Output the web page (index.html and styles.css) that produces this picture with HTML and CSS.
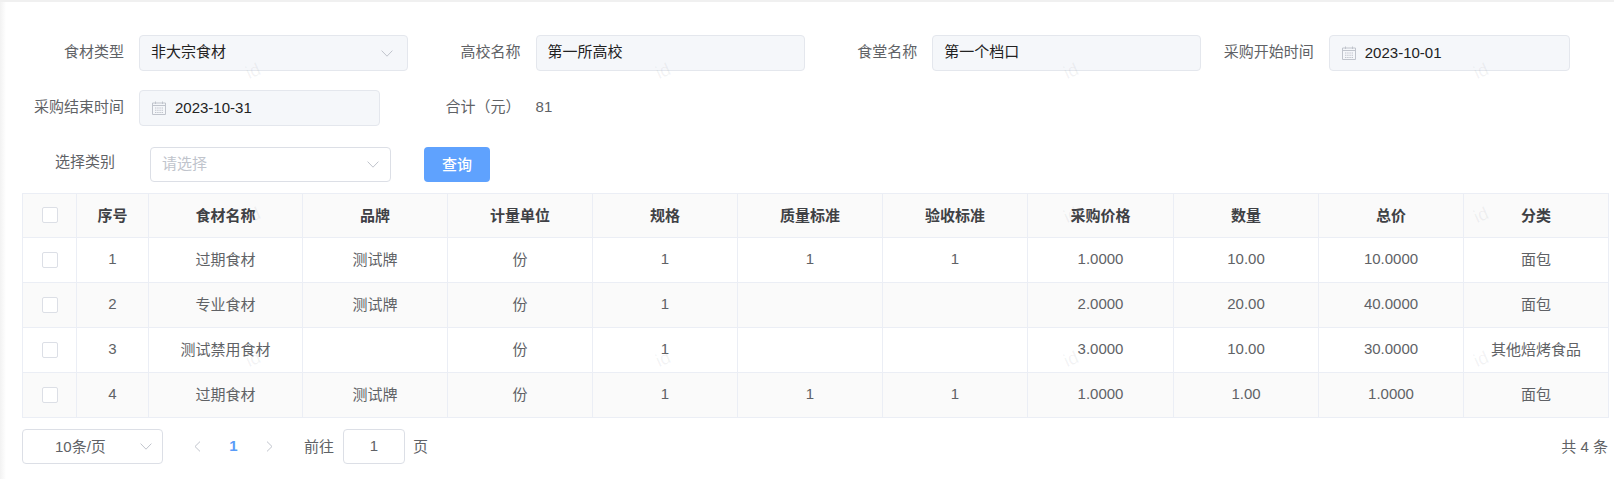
FILE: index.html
```html
<!DOCTYPE html>
<html lang="zh-CN">
<head>
<meta charset="utf-8">
<title>食材采购</title>
<link rel="stylesheet" href="styles.css">
</head>
<body>
<svg class="sprite" width="0" height="0" aria-hidden="true">
  <symbol id="chev" viewBox="0 0 12 7"><path d="M0.6 0.6 L6 6.2 L11.4 0.6" fill="none" stroke="currentColor" stroke-width="1"/></symbol>
  <symbol id="cal" viewBox="0 0 14 14">
    <path d="M0.5 2h13v11.5h-13z M0.5 4.5h13 M3.5 0.5v2.5 M10.5 0.5v2.5" fill="none" stroke="currentColor" stroke-width="1"/>
    <path d="M3 6.5h1.4v1H3z M5.2 6.5h1.4v1H5.2z M7.4 6.5h1.4v1H7.4z M9.6 6.5h1.4v1H9.6z M3 8.7h1.4v1H3z M5.2 8.7h1.4v1H5.2z M7.4 8.7h1.4v1H7.4z M9.6 8.7h1.4v1H9.6z M3 10.9h1.4v1H3z M5.2 10.9h1.4v1H5.2z M7.4 10.9h1.4v1H7.4z M9.6 10.9h1.4v1H9.6z" fill="currentColor"/>
  </symbol>
</svg>
<main class="page">
  <section class="form">
    <div class="form-row row-one">
      <div class="item"><span class="label">食材类型</span><div class="control filled select"><span>非大宗食材</span><svg class="chev"><use href="#chev"/></svg></div></div>
      <div class="item"><span class="label">高校名称</span><div class="control filled"><span>第一所高校</span></div></div>
      <div class="item"><span class="label">食堂名称</span><div class="control filled"><span>第一个档口</span></div></div>
      <div class="item"><span class="label">采购开始时间</span><div class="control filled date"><svg class="cal"><use href="#cal"/></svg><span>2023-10-01</span></div></div>
    </div>
    <div class="form-row row-two">
      <div class="item"><span class="label">采购结束时间</span><div class="control filled date"><svg class="cal"><use href="#cal"/></svg><span>2023-10-31</span></div></div>
      <div class="item"><span class="label">合计（元）</span><span class="value">81</span></div>
    </div>
    <div class="form-row row-three">
      <span class="label label-short">选择类别</span>
      <div class="control select pick"><span class="placeholder">请选择</span><svg class="chev"><use href="#chev"/></svg></div>
      <button class="btn" type="button">查询</button>
    </div>
  </section>

  <table class="grid">
    <colgroup>
      <col class="c-check"><col class="c-no"><col class="c-name">
      <col class="c-std"><col class="c-std"><col class="c-std"><col class="c-std"><col class="c-std"><col class="c-wide"><col class="c-std"><col class="c-std"><col class="c-std">
    </colgroup>
    <thead>
      <tr><th><span class="box"></span></th><th>序号</th><th>食材名称</th><th>品牌</th><th>计量单位</th><th>规格</th><th>质量标准</th><th>验收标准</th><th>采购价格</th><th>数量</th><th>总价</th><th>分类</th></tr>
    </thead>
    <tbody>
      <tr><td><span class="box"></span></td><td>1</td><td>过期食材</td><td>测试牌</td><td>份</td><td>1</td><td>1</td><td>1</td><td>1.0000</td><td>10.00</td><td>10.0000</td><td>面包</td></tr>
      <tr><td><span class="box"></span></td><td>2</td><td>专业食材</td><td>测试牌</td><td>份</td><td>1</td><td></td><td></td><td>2.0000</td><td>20.00</td><td>40.0000</td><td>面包</td></tr>
      <tr><td><span class="box"></span></td><td>3</td><td>测试禁用食材</td><td></td><td>份</td><td>1</td><td></td><td></td><td>3.0000</td><td>10.00</td><td>30.0000</td><td>其他焙烤食品</td></tr>
      <tr><td><span class="box"></span></td><td>4</td><td>过期食材</td><td>测试牌</td><td>份</td><td>1</td><td>1</td><td>1</td><td>1.0000</td><td>1.00</td><td>1.0000</td><td>面包</td></tr>
    </tbody>
  </table>

  <nav class="pager">
    <div class="control select sizes"><span>10条/页</span><svg class="chev"><use href="#chev"/></svg></div>
    <div class="pages">
      <svg class="arrow" viewBox="0 0 7 11"><path d="M6 0.6 L1 5.5 L6 10.4" fill="none" stroke="currentColor"/></svg>
      <span class="current">1</span>
      <svg class="arrow" viewBox="0 0 7 11"><path d="M1 0.6 L6 5.5 L1 10.4" fill="none" stroke="currentColor"/></svg>
    </div>
    <span class="goto">前往</span>
    <div class="control jump">1</div>
    <span class="goto-end">页</span>
    <span class="total">共 4 条</span>
  </nav>

  <div class="marks" aria-hidden="true">
    <span class="mark m1">id</span><span class="mark m2">id</span><span class="mark m3">id</span><span class="mark m4">id</span>
    <span class="mark m5">id</span><span class="mark m6">id</span><span class="mark m7">id</span><span class="mark m8">id</span>
    <span class="mark m9">id</span><span class="mark m10">id</span><span class="mark m11">id</span><span class="mark m12">id</span>
  </div>
</main>
</body>
</html>
```

FILE: styles.css
```css
* { box-sizing: border-box; }

html, body {
  margin: 0;
  height: 100%;
  background: #fff;
  overflow: hidden;
}

body {
  font-family: "Liberation Sans", "Noto Sans CJK SC", sans-serif;
  font-size: 15px;
  color: #606266;
}

.sprite { position: absolute; }

.page {
  position: relative;
  height: 479px;
  padding: 33px 6px 0 22px;
  border-top: 2px solid #f0f0f0;
  background: linear-gradient(to right, #f2f2f2 0, #fff 6px);
}

.form { margin-left: 12px; }

.form-row { display: flex; align-items: center; }
.row-one { height: 36px; }
.row-two { height: 36px; margin-top: 19px; }
.row-three { height: 35px; margin-top: 21px; }

.item {
  display: flex;
  align-items: center;
  width: 396.6px;
  flex: none;
}

.label {
  width: 90px;
  margin-right: 15px;
  padding-bottom: 5px;
  text-align: right;
  flex: none;
  color: #606266;
  white-space: nowrap;
}

.label-short { width: 81px; margin-right: 35px; padding-bottom: 8px; }

.control {
  height: 100%;
  display: flex;
  align-items: center;
  border: 1px solid #dcdfe6;
  border-radius: 4px;
  background: #fff;
}

.control > span { padding-bottom: 5px; }

.item .control { height: 36px; width: 269px; padding: 0 11px; }
.filled { background: #f5f7fa; border-color: #e4e7ed; color: #222; }
.item .date { width: 241px; padding-left: 12px; }
.date > span { padding-bottom: 2px; }

.select { justify-content: space-between; }
.item .select { padding-right: 14px; }

.chev { width: 12px; height: 7px; color: #c0c4cc; flex: none; }
.cal { width: 14px; height: 14px; color: #c0c4cc; margin-right: 9px; flex: none; }

.value { padding-bottom: 3px; }

.pick { width: 241px; padding: 0 11px 0 11px; }
.placeholder { color: #c0c4cc; }

.btn {
  width: 66px;
  height: 35px;
  margin-left: 33px;
  padding: 0 0 3px;
  border: 0;
  border-radius: 4px;
  background: #5fa2fe;
  color: #fff;
  font: inherit;
  font-weight: 500;
}

.grid {
  width: 1586px;
  margin-top: 11px;
  border-collapse: collapse;
  table-layout: fixed;
}

.c-check { width: 54px; }
.c-no { width: 72px; }
.c-name { width: 154px; }
.c-std { width: 145px; }
.c-wide { width: 146px; }

.grid th, .grid td {
  border: 1px solid #ebeef5;
  padding: 0 0 3px;
  text-align: center;
  height: 45px;
  font-weight: normal;
}

.grid th {
  height: 44px;
  background: #fafafa;
  color: #3f4145;
  font-weight: 700;
}

.grid th:first-child, .grid td:first-child { padding-bottom: 1px; }

.grid tbody tr:nth-child(even) td { background: #fafafa; }

.box {
  display: block;
  width: 16px;
  height: 16px;
  margin: 0 auto;
  border: 1px solid #dcdfe6;
  border-radius: 2px;
  background: #fff;
}

.pager {
  display: flex;
  align-items: center;
  height: 35px;
  margin-top: 11px;
}

.pager > span, .jump, .current { padding-bottom: 2px; }
.control.sizes > span { padding-bottom: 2px; }

.sizes {
  width: 141px;
  height: 35px;
  padding: 0 10px 0 32px;
}

.pages {
  display: flex;
  align-items: center;
  margin-left: 31px;
}

.arrow { width: 7px; height: 11px; color: #c0c4cc; flex: none; }

.current {
  width: 65px;
  text-align: center;
  color: #5a9cf8;
  font-weight: 700;
}

.goto { margin-left: 31px; }

.jump {
  width: 62px;
  height: 35px;
  margin-left: 9px;
  justify-content: center;
}

.goto-end { margin-left: 8px; }

.total { margin-left: auto; }

.mark {
  position: absolute;
  font-size: 18px;
  line-height: 18px;
  color: rgba(120, 120, 130, 0.09);
  transform: rotate(-24deg);
}

.m1  { left: 246px;  top: 60px; }
.m2  { left: 656px;  top: 60px; }
.m3  { left: 1064px; top: 60px; }
.m4  { left: 1474px; top: 60px; }
.m5  { left: 246px;  top: 204px; }
.m6  { left: 656px;  top: 204px; }
.m7  { left: 1064px; top: 204px; }
.m8  { left: 1474px; top: 204px; }
.m9  { left: 246px;  top: 348px; }
.m10 { left: 656px;  top: 348px; }
.m11 { left: 1064px; top: 348px; }
.m12 { left: 1474px; top: 348px; }
```
